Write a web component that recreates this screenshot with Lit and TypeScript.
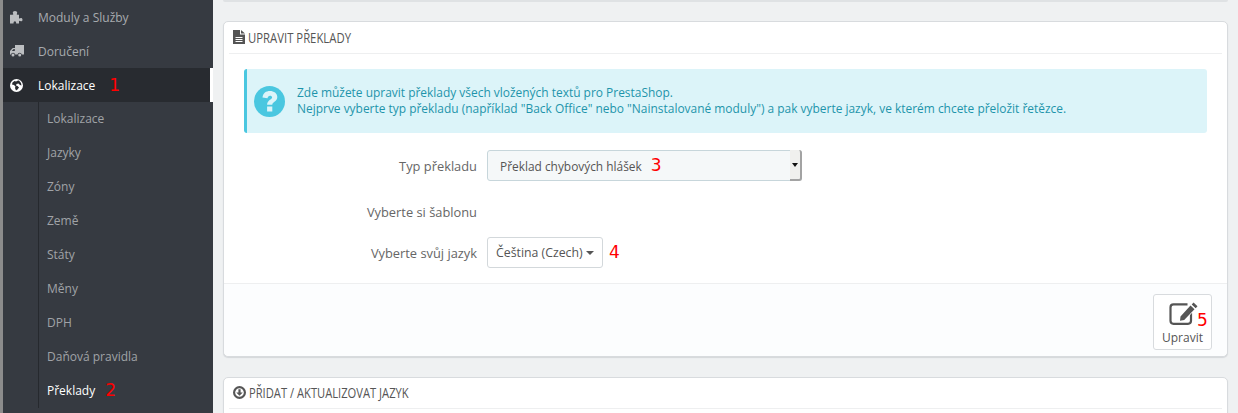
import { LitElement, html, css, svg } from "lit";
import { customElement } from "lit/decorators.js";

const puzzle = svg`<path d="M5 0c1.300 0 2.200.8 2.200 1.800 0 .6-.5 1-.5 1.400 0 .3.3.5.8.5H9v3.200c0 .4.200.7.500.7.400 0 .8-.5 1.400-.5.900 0 1.600.7 1.600 1.600s-.7 1.600-1.600 1.600c-.6 0-1-.5-1.400-.5-.3 0-.5.300-.5.700V12.500H6.200c0-1.600-.5-2.300-1.300-2.300s-1.400.7-1.400 2.300H0V3.700h2.500c.6 0 .8-.2.800-.5 0-.4-.5-.8-.5-1.400C2.800.8 3.700 0 5 0z"/>`;
const truck = svg`<path fill-rule="evenodd" d="M5 0h9v9.500h-2.200a2.200 2.200 0 0 0-4.300 0H5.200a2.200 2.200 0 0 0-4.300 0H0V6l2.800-3H5V0zM1.800 6h3V4H3.700L1.800 6zM3 8.500a1.500 1.500 0 1 1 0 3 1.500 1.500 0 0 1 0-3zM9.700 8.500a1.500 1.500 0 1 1 0 3 1.500 1.500 0 0 1 0-3z"/>`;
const globe = svg`<path fill-rule="evenodd" d="M6.500 0a6.500 6.500 0 1 1 0 13 6.500 6.500 0 0 1 0-13zM8 1.500 6 2.500l-1.500-.5-2 1.500L2 5.500l2 .5 1.500 1.500L5 9l1 2.500 1.500-1L9 8.500 7.500 7l-1.500-.5L6.500 5 8.500 4.500 10 6l1.500.5-.5-2.500-2-2.500z"/>`;

const subItems = ["Lokalizace", "Jazyky", "Zóny", "Země", "Státy", "Měny", "DPH", "Daňová pravidla"];

@customElement("app-root")
export class AppRoot extends LitElement {
  static styles = css`
    :host { display: block; width: 1238px; height: 413px; overflow: hidden; background: #eff1f2; font-family: "Open Sans", "Noto Sans", sans-serif; }
    * { box-sizing: border-box; }
    .page { display: flex; height: 413px; overflow: hidden; }
    .side { width: 213px; flex: none; background: #363a41; border-left: 3px solid #8c8c8c; height: 413px; }
    .row { height: 34px; display: flex; align-items: center; font-size: 12px; color: #a8abaf; }
    .row .ic { width: 35px; padding-left: 7px; display: flex; flex: none; }
    .row svg { fill: #bcbec1; display: block; }
    .row.active { background: #282b30; color: #fff; border-right: 3px solid #fff; }
    .row.active svg { fill: #fff; }
    .sub { margin-left: 35px; border-left: 1px solid #26292e; padding-left: 8px; height: 306px; }
    .sub .row { color: #a0a3a7; padding-bottom: 2px; }
    .sub .row.on { color: #fff; }
    .n { color: #f00; font-size: 17px; line-height: 1; font-family: "DejaVu Sans", "Noto Sans", sans-serif; }
    .n1 { margin-left: 14px; }
    .n2 { margin-left: 10px; }
    .main { flex: 1; min-width: 0; padding: 0 10px; }
    .sliver { height: 2px; background: #dfe2e4; border-radius: 0 0 4px 4px; margin-bottom: 19px; }
    .panel { background: #fff; border: 1px solid #d8dbde; border-radius: 5px; box-shadow: 0 1px 1px #d4d7da; padding: 0 5px; }
    .ph { height: 32px; display: flex; align-items: center; gap: 3px; border-bottom: 1px solid #eeeff0; color: #555; font-size: 15px; padding: 0 0 2px 4px; }
    .ph .t { display: inline-block; transform: scaleX(.755); transform-origin: left center; white-space: nowrap; }
    .ph svg { fill: #555; display: block; flex: none; }
    .body { padding: 15px 15px 0 15px; }
    .alert { height: 64px; background: #dcf4f9; border-left: 3px solid #4ac7e0; border-radius: 3px; display: flex; align-items: center; color: #1e94ab; font-size: 11.95px; line-height: 16px; padding-left: 7px; gap: 12px; }
    .alert svg { flex: none; display: block; }
    .form { display: grid; grid-template-columns: 233px 1fr; column-gap: 10px; align-items: center; padding-top: 17px; color: #666; font-size: 12.85px; }
    .lbl { text-align: right; }
    .lbl2 { height: 56px; line-height: 62px; }
    .select { position: relative; width: 315px; height: 31px; background: #f5f8f9; border: 1px solid #c7d6db; border-radius: 3px; display: flex; align-items: center; padding-left: 12px; font-size: 11.9px; gap: 9px; color: #555; }
    .spin { position: absolute; right: -1px; top: -1px; bottom: -1px; width: 12px; background: #f0f0ee; border-right: 2px solid #a3a3a3; border-bottom: 2px solid #a3a3a3; display: flex; align-items: center; justify-content: center; border-radius: 0 3px 3px 0; }
    .spin::after { content: ""; border: 3px solid transparent; border-top: 4px solid #111; border-bottom: 0; }
    .lang { display: flex; align-items: center; gap: 6px; }
    .dd { width: 116px; height: 31px; background: #fff; border: 1px solid #d3d8db; border-radius: 3px; display: flex; align-items: center; padding-left: 8px; gap: 3px; font-size: 12.3px; color: #555; }
    .caret { border: 4px solid transparent; border-top: 4px solid #555; border-bottom: 0; }
    .foot { margin: 15px -5px 0; height: 73px; background: #fcfdfe; border-top: 1px solid #eeeff0; border-radius: 0 0 5px 5px; display: flex; justify-content: flex-end; padding: 10px 15px 0 0; }
    .btn { position: relative; width: 59px; height: 56px; background: #fff; border: 1px solid #d8dbde; border-radius: 3px; display: flex; flex-direction: column; align-items: center; color: #555; font-size: 12px; padding-top: 6px; gap: 2px; }
    .btn svg { display: block; }
    .btn .n { position: absolute; left: 43px; top: 17px; }
    .second { margin-top: 20px; height: 80px; }
    .second .ph { height: 31px; }
    .second .t { transform: scaleX(.745); }
    .pen { paint-order: stroke; }
  `;

  render() {
    return html`<div class="page">
      <nav class="side">
        <div class="row"><span class="ic"><svg width="13" height="13" viewBox="0 0 13 13">${puzzle}</svg></span>Moduly a Služby</div>
        <div class="row"><span class="ic"><svg width="14" height="12" viewBox="0 0 14 12">${truck}</svg></span>Doručení</div>
        <div class="row active"><span class="ic"><svg width="13" height="13" viewBox="0 0 13 13">${globe}</svg></span>Lokalizace<span class="n n1">1</span></div>
        <div class="sub">
          ${subItems.map((s) => html`<div class="row">${s}</div>`)}
          <div class="row on">Překlady<span class="n n2">2</span></div>
        </div>
      </nav>
      <main class="main">
        <div class="sliver"></div>
        <section class="panel">
          <div class="ph">
            <svg width="12" height="14" viewBox="0 0 12 14"><path d="M0 0h7v4.500h5V14H0V0zm8 0 4 3.500H8V0zM2.500 7v1h7V7h-7zm0 2v1h7V9h-7zm0 2v1h7v-1h-7z" fill-rule="evenodd"/></svg>
            <span class="t">UPRAVIT PŘEKLADY</span>
          </div>
          <div class="body">
            <div class="alert">
              <svg width="31" height="31" viewBox="0 0 31 31"><circle cx="15.500" cy="15.500" r="15.500" fill="#4ac7e0"/><path d="M8.500 11.500C9 7 12 5 16 5c3.800 0 7.300 2.200 7.300 6 0 4.600-5 4.800-5 7.800h-5.200c0-5 5-5.300 5-7.400 0-1-1-1.700-2.100-1.700-1.300 0-2.200.9-2.500 2.600l-5-.8zM13.100 20.500h5.200v5h-5.200z" fill="#dcf4f9"/></svg>
              <div>Zde můžete upravit překlady všech vložených textů pro PrestaShop.<br>Nejprve vyberte typ překladu (například "Back Office" nebo "Nainstalované moduly") a pak vyberte jazyk, ve kterém chcete přeložit řetězce.</div>
            </div>
            <div class="form">
              <div class="lbl">Typ překladu</div>
              <div class="select">Překlad chybových hlášek <span class="n">3</span><span class="spin"></span></div>
              <div class="lbl lbl2">Vyberte si šablonu</div><div></div>
              <div class="lbl">Vyberte svůj jazyk</div>
              <div class="lang"><div class="dd">Čeština (Czech) <span class="caret"></span></div><span class="n">4</span></div>
            </div>
          </div>
          <div class="foot">
            <div class="btn">
              <svg width="32" height="26" viewBox="0 0 32 26"><path d="M20.500 3.400H6.500a3 3 0 0 0-3 3v13.400a3 3 0 0 0 3 3h14.500a3 3 0 0 0 3-3v-8" fill="none" stroke="#555" stroke-width="2.200"/><path class="pen" d="M26.500 1.500l4 3.700-1.800 2-4-3.700 1.800-2zM23.500 4.600l4 3.700-10.300 10.700-4.200.8.500-4.400L23.500 4.600z" fill="#555" stroke="#fff" stroke-width="1.400"/></svg>
              Upravit<span class="n">5</span>
            </div>
          </div>
        </section>
        <section class="panel second">
          <div class="ph">
            <svg width="13" height="13" viewBox="0 0 12 12"><path fill-rule="evenodd" d="M6 0a6 6 0 1 1 0 12A6 6 0 0 1 6 0zm0 2a4 4 0 1 0 0 8 4 4 0 0 0 0-8zM5 3h2v3h2L6 9 3 6h2V3z"/></svg>
            <span class="t">PŘIDAT / AKTUALIZOVAT JAZYK</span>
          </div>
        </section>
      </main>
    </div>`;
  }
}
